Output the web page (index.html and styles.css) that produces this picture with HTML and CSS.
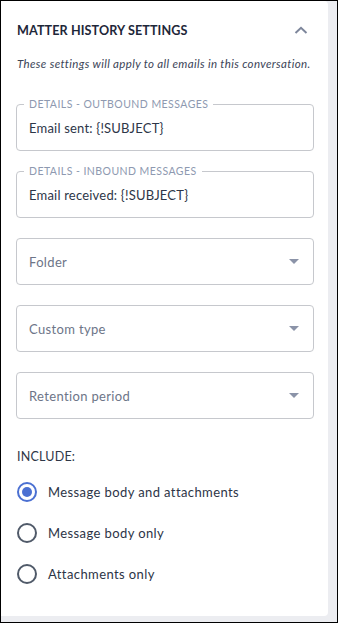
FILE: index.html
```html
<!DOCTYPE html>
<html>
<head>
<meta charset="utf-8">
<link rel="stylesheet" href="styles.css">
</head>
<body>
<div class="frame">
  <div class="card">
    <div class="header">
      <h1 class="title">MATTER HISTORY SETTINGS</h1>
      <svg class="chevron" width="14" height="8" viewBox="0 0 14 8"><path d="M1.5 7 L7 1.8 L12.5 7" fill="none" stroke="#7d869b" stroke-width="2"/></svg>
    </div>
    <p class="subtitle">These settings will apply to all emails in this conversation.</p>

    <div class="fields">
      <div class="field">
        <span class="field-label">DETAILS - OUTBOUND MESSAGES</span>
        <span class="value">Email sent: {!SUBJECT}</span>
      </div>
      <div class="field">
        <span class="field-label">DETAILS - INBOUND MESSAGES</span>
        <span class="value">Email received: {!SUBJECT}</span>
      </div>
      <div class="field select">
        <span class="placeholder">Folder</span>
        <span class="caret"></span>
      </div>
      <div class="field select">
        <span class="placeholder">Custom type</span>
        <span class="caret"></span>
      </div>
      <div class="field select">
        <span class="placeholder">Retention period</span>
        <span class="caret"></span>
      </div>
    </div>

    <div class="include">INCLUDE:</div>
    <div class="radios">
      <div class="radio-row"><span class="radio checked"></span><span class="radio-label">Message body and attachments</span></div>
      <div class="radio-row"><span class="radio"></span><span class="radio-label">Message body only</span></div>
      <div class="radio-row"><span class="radio"></span><span class="radio-label">Attachments only</span></div>
    </div>
  </div>
</div>
</body>
</html>
```

FILE: styles.css
```css
* { box-sizing: border-box; }
html, body { margin: 0; padding: 0; }
body {
  font-family: "Lato", "Noto Sans", sans-serif;
  background: #ecedf1;
}
.frame {
  width: 338px;
  height: 623px;
  border: 1px solid #000;
  background: #ecedf1;
  overflow: hidden;
}
.card {
  width: 327px;
  height: 615px;
  background: #fff;
  border-radius: 0 4px 4px 0;
  padding: 22px 14px 0 15px;
}
.header {
  display: flex;
  justify-content: space-between;
  align-items: center;
  height: 16px;
}
.title {
  margin: 0;
  font-size: 12.6px;
  font-weight: 700;
  letter-spacing: 0.1px;
  color: #1e2739;
  line-height: 16px;
  padding-left: 1px;
}
.chevron { margin-right: 6px; margin-top: -2px; }
.subtitle {
  margin: 18px 0 0 0;
  font-size: 11.5px;
  font-style: italic;
  line-height: 14px;
  letter-spacing: 0.35px;
  color: #3b4457;
  white-space: nowrap;
  padding-left: 1px;
}
.fields {
  margin-top: 33px;
  display: flex;
  flex-direction: column;
  gap: 20px;
}
.field {
  position: relative;
  height: 47px;
  border: 1px solid #c6c8cd;
  border-radius: 4px;
  display: flex;
  align-items: center;
  padding: 0 12px;
}
.field-label {
  position: absolute;
  top: -8px;
  left: 7px;
  padding: 0 5px;
  background: #fff;
  font-size: 10.5px;
  line-height: 14px;
  color: #8e99b0;
  letter-spacing: 0.45px;
}
.value {
  font-size: 13px;
  color: #2d3648;
  margin-top: 1px;
  letter-spacing: 0.2px;
}
.select { justify-content: space-between; }
.placeholder {
  font-size: 13px;
  color: #6d7588;
  letter-spacing: 0.35px;
}
.caret {
  width: 0;
  height: 0;
  border-left: 5px solid transparent;
  border-right: 5px solid transparent;
  border-top: 5px solid #8b93a8;
  margin-right: 2px;
}
.include {
  margin-top: 30px;
  font-size: 12.5px;
  line-height: 16px;
  color: #2f3747;
  padding-left: 1px;
  letter-spacing: 0.2px;
}
.radios {
  margin-top: 6px;
  display: flex;
  flex-direction: column;
}
.radio-row {
  height: 41px;
  display: flex;
  align-items: center;
  gap: 11px;
  padding-left: 1px;
}
.radio {
  width: 20px;
  height: 20px;
  border-radius: 50%;
  border: 2px solid #505a69;
  display: flex;
  align-items: center;
  justify-content: center;
}
.radio.checked { border-color: #4b70d2; }
.radio.checked::after {
  content: "";
  width: 10px;
  height: 10px;
  border-radius: 50%;
  background: #4b70d2;
}
.radio-label {
  font-size: 13px;
  color: #2c3446;
  letter-spacing: 0.4px;
}
```
